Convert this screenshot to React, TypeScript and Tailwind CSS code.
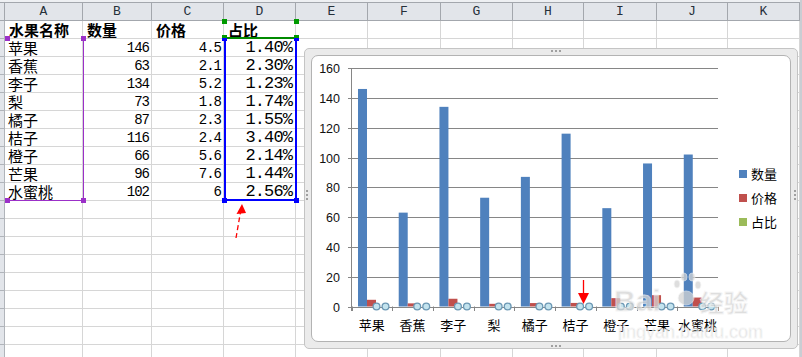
import React from 'react';

const cols = [
  { key: 'A', w: 'w-[78px]' },
  { key: 'B', w: 'w-[69px]' },
  { key: 'C', w: 'w-[72px]' },
  { key: 'D', w: 'w-[72px]' },
  { key: 'E', w: 'w-[72px]' },
  { key: 'F', w: 'w-[73px]' },
  { key: 'G', w: 'w-[72px]' },
  { key: 'H', w: 'w-[71px]' },
  { key: 'I', w: 'w-[73px]' },
  { key: 'J', w: 'w-[71px]' },
  { key: 'K', w: 'w-[72px]' },
];

const fruits = ['苹果', '香蕉', '李子', '梨', '橘子', '桔子', '橙子', '芒果', '水蜜桃'];
const qty = [146, 63, 134, 73, 87, 116, 66, 96, 102];
const price = ['4.5', '2.1', '5.2', '1.8', '2.3', '2.4', '5.6', '7.6', '6'];
const ratio = ['1.40%', '2.30%', '1.23%', '1.74%', '1.55%', '3.40%', '2.14%', '1.44%', '2.56%'];

const cjk = "font-['Noto_Sans_CJK_SC',sans-serif]";
const mono = "font-['Liberation_Mono',monospace]";

type Cell = { text?: string; kind?: 'head' | 'cn' | 'num' | 'pct' };

const rows: Cell[][] = [
  [
    { text: '水果名称', kind: 'head' },
    { text: '数量', kind: 'head' },
    { text: '价格', kind: 'head' },
    { text: '占比', kind: 'head' },
  ],
  ...fruits.map((f, i) => [
    { text: f, kind: 'cn' as const },
    { text: String(qty[i]), kind: 'num' as const },
    { text: price[i], kind: 'num' as const },
    { text: ratio[i], kind: 'pct' as const },
  ]),
];
while (rows.length < 19) rows.push([]);

const cellText = (c?: Cell) => {
  if (!c || !c.text) return null;
  if (c.kind === 'head')
    return <span className={`${cjk} pl-[4px] text-[15px] font-bold leading-none`}>{c.text}</span>;
  if (c.kind === 'cn')
    return <span className={`${cjk} pl-[3px] text-[15px] leading-none`}>{c.text}</span>;
  if (c.kind === 'pct')
    return (
      <span className={`${mono} ml-auto pr-[3px] text-[17px] tracking-[-0.9px] leading-none`}>{c.text}</span>
    );
  return <span className={`${mono} ml-auto pr-[2px] text-[14px] tracking-[-1px] leading-none`}>{c.text}</span>;
};

const X0 = 351.5;
const Y0 = 306.5;
const K = 1.49;
const CW = 40.72;

function Chart() {
  const grid = [0, 20, 40, 60, 80, 100, 120, 140, 160];
  return (
    <svg width="477" height="284" viewBox="312 56 477 284" className="block">
      {grid.map((v) => {
        const y = Math.round(Y0 - v * K) + 0.5;
        return (
          <g key={v}>
            <line x1={348} x2={718} y1={y} y2={y} stroke="#868686" strokeWidth="1" />
            <text
              x={340}
              y={y + 4.5}
              textAnchor="end"
              fontSize="12.5"
              fontFamily="Liberation Sans, Arial, sans-serif"
              fill="#111"
            >
              {v}
            </text>
          </g>
        );
      })}
      <line x1={X0} x2={X0} y1={68} y2={Y0 + 4.5} stroke="#868686" />
      {Array.from({ length: 10 }).map((_, i) => {
        const x = Math.round(X0 + i * CW) + 0.5;
        return <line key={i} x1={x} x2={x} y1={Y0} y2={Y0 + 4.5} stroke="#868686" />;
      })}
      {fruits.map((f, i) => {
        const s = X0 + i * CW;
        const hq = qty[i] * K;
        const hp = parseFloat(price[i]) * K;
        return (
          <g key={f}>
            <rect x={s + 6.5} y={Y0 - hq} width={9} height={hq} fill="#4f81bd" />
            <rect x={s + 15.5} y={Y0 - hp} width={9} height={hp} fill="#c0504d" />
            <circle cx={s + 25} cy={Y0} r={3.4} fill="#c3e3ee" stroke="#6c98b4" strokeWidth="1.3" />
            <circle cx={s + 34} cy={Y0} r={3.4} fill="#c3e3ee" stroke="#6c98b4" strokeWidth="1.3" />
            <text
              x={s + CW / 2}
              y={330}
              textAnchor="middle"
              fontSize="13"
              fontFamily="Noto Sans CJK SC, sans-serif"
              fill="#000"
            >
              {f}
            </text>
          </g>
        );
      })}
      {[
        { c: '#4f81bd', t: '数量', y: 174 },
        { c: '#c0504d', t: '价格', y: 198 },
        { c: '#9bbb59', t: '占比', y: 222 },
      ].map((l) => (
        <g key={l.t}>
          <rect x={739} y={l.y - 4} width={8} height={8} fill={l.c} />
          <text x={751} y={l.y + 5} fontSize="13" fontFamily="Noto Sans CJK SC, sans-serif" fill="#000">
            {l.t}
          </text>
        </g>
      ))}
      {/* watermark */}
      <g opacity="0.75" fill="#d4d4d4" stroke="#f4f4f4" strokeWidth="0.8">
        <text x={614} y={311} fontSize="30" fontWeight="bold" fontFamily="Liberation Sans, Arial, sans-serif">
          Bai
        </text>
        <ellipse cx={686} cy={298} rx={8} ry={7} />
        <ellipse cx={677} cy={284} rx={3} ry={4} />
        <ellipse cx={684} cy={277} rx={3} ry={4} />
        <ellipse cx={692} cy={277} rx={3} ry={4} />
        <ellipse cx={698} cy={285} rx={3} ry={4} />
        <text x={700} y={312} fontSize="24" fontWeight="bold" fontFamily="Noto Sans CJK SC, sans-serif">
          经验
        </text>
        <text x={618} y={338} fontSize="18" fontFamily="Liberation Sans, Arial, sans-serif">
          jingyan.baidu.com
        </text>
      </g>
      <line x1={583.5} x2={583.5} y1={280} y2={294} stroke="#ff0000" strokeWidth="1.3" />
      <polygon points="578,293 589,293 583.5,304" fill="#ff0000" />
    </svg>
  );
}

export default function App() {
  return (
    <div className="relative w-[802px] h-[357px] overflow-hidden bg-white text-black">
      <div className="flex">
        <div className="flex flex-col">
          <div className="h-[2px] w-[5px] bg-[#eef0f3]" />
          <div className="h-[19px] w-[5px] bg-[#e2e5ea] border-t border-b border-r border-[#a3a7ad]" />
          {rows.map((_, i) => (
            <div key={i} className="h-[18px] w-[5px] bg-[#e2e5ea] border-b border-r border-[#b0b4ba]" />
          ))}
        </div>
        {cols.map((c, ci) => (
          <div key={c.key} className={`${c.w} flex flex-col`}>
            <div className="h-[2px] bg-[#eef0f3]" />
            <div
              className={`h-[19px] flex items-center justify-center bg-[#e2e5ea] border-t border-b border-r border-[#a3a7ad] ${mono} text-[13px] text-[#26303a]`}
            >
              {c.key}
            </div>
            {rows.map((r, ri) => (
              <div key={ri} className="h-[18px] flex items-center border-b border-r border-[#d6d6d6]">
                {cellText(r[ci])}
              </div>
            ))}
          </div>
        ))}
        <div className="w-[2px] h-[357px] bg-[#c9cdd3]" />
      </div>

      {/* selection: A2:A10 */}
      <div className="absolute left-[6px] top-[38px] w-[78px] h-[163px] border-r border-b border-[#9b30c8]" />
      {[
        'left-[5px] top-[36px]',
        'left-[81px] top-[36px]',
        'left-[5px] top-[198px]',
        'left-[81px] top-[198px]',
      ].map((p) => (
        <div key={p} className={`absolute ${p} w-[5px] h-[5px] bg-[#9b30c8]`} />
      ))}

      {/* selection: D1 */}
      <div className="absolute left-[224px] top-[37px] w-[73px] h-[2px] bg-[#008a00]" />
      {['left-[222px] top-[19px]', 'left-[294px] top-[19px]', 'left-[222px] top-[35px]', 'left-[294px] top-[35px]'].map(
        (p) => (
          <div key={p} className={`absolute ${p} w-[5px] h-[5px] bg-[#009a00]`} />
        ),
      )}

      {/* selection: D2:D10 */}
      <div className="absolute left-[224px] top-[39px] w-[73px] h-[162px] border-l-2 border-r-2 border-b-2 border-[#0000ff]" />
      {['left-[222px] top-[38px]', 'left-[294px] top-[38px]', 'left-[222px] top-[198px]', 'left-[294px] top-[198px]'].map(
        (p) => (
          <div key={p} className={`absolute ${p} w-[5px] ${p.includes('38') ? 'h-[3px]' : 'h-[5px]'} bg-[#0000ff]`} />
        ),
      )}

      {/* chart */}
      <div className="absolute left-[304px] top-[48px] w-[494px] h-[301px] rounded-[5px] border border-[#c4c4c4] bg-[#ebebeb] p-[6px]">
        <div className="absolute left-1/2 top-[1px] w-[10px] border-t-2 border-dotted border-[#a0a0a0]" />
        <div className="absolute left-1/2 bottom-[1px] w-[10px] border-t-2 border-dotted border-[#a0a0a0]" />
        <div className="absolute right-[1px] top-[141px] h-[10px] border-l-2 border-dotted border-[#a0a0a0]" />
        <div className="absolute left-[1px] top-[141px] h-[10px] border-l-2 border-dotted border-[#a0a0a0]" />
        <div className="w-full h-full rounded-[7px] border border-[#b3b3b3] bg-white overflow-hidden">
          <Chart />
        </div>
      </div>

      {/* annotation arrow on sheet */}
      <svg className="absolute left-0 top-0 pointer-events-none" width="802" height="357">
        <path d="M236 238 L240.5 212" stroke="#ff0000" strokeWidth="1.3" strokeDasharray="5 3" fill="none" />
        <polygon points="242,204 236.5,214 246,213" fill="#ff0000" />
      </svg>
    </div>
  );
}
